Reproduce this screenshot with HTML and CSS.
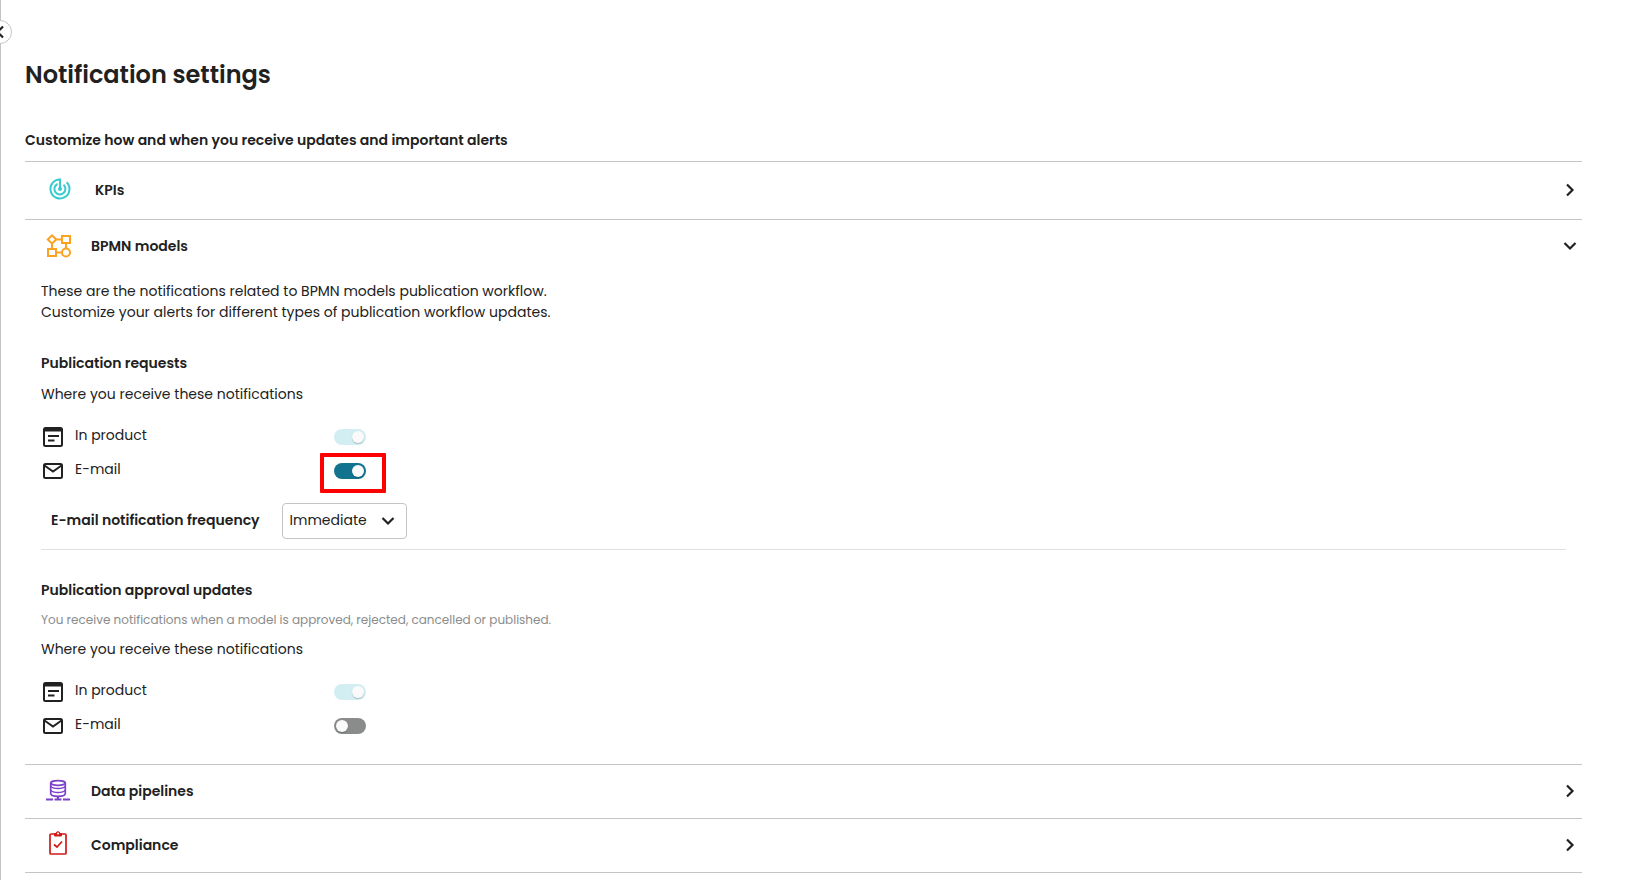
FILE: index.html
```html
<!DOCTYPE html>
<html lang="en">
<head>
  <meta charset="UTF-8" />
  <meta name="viewport" content="width=device-width, initial-scale=1.0"/>
  <title>Notification settings</title>
  <link rel="stylesheet" href="styles.css">
</head>
<body>
  <!-- shared icons -->
  <svg class="sprite" aria-hidden="true">
    <symbol id="chevron" viewBox="0 0 16 16">
      <path d="M5 2.5L10.5 8L5 13.5" fill="none" stroke="currentColor" stroke-width="2.2"/>
    </symbol>
    <symbol id="inProduct" viewBox="0 0 24 24">
      <path d="M19.5 2h-15A2.5 2.5 0 0 0 2 4.5v15A2.5 2.5 0 0 0 4.5 22h15a2.5 2.5 0 0 0 2.5-2.5v-15A2.5 2.5 0 0 0 19.5 2zM20 19.5a.5.5 0 0 1-.5.5h-15a.5.5 0 0 1-.5-.5V6.5h16z" fill="currentColor"/>
      <path d="M7 11h11M7 15.500h6.500" fill="none" stroke="currentColor" stroke-width="2"/>
    </symbol>
    <symbol id="mail" viewBox="0 0 24 24">
      <rect x="3" y="5" width="18" height="14" rx="1.5" fill="none" stroke="currentColor" stroke-width="2"/>
      <path d="M3.5 6.5L12 12.5L20.5 6.5" fill="none" stroke="currentColor" stroke-width="2"/>
    </symbol>
  </svg>

  <button class="collapse-button" aria-label="Collapse sidebar">
    <svg class="chevron flip"><use href="#chevron"/></svg>
  </button>

  <main class="page">
    <h1>Notification settings</h1>
    <p class="subtitle">Customize how and when you receive updates and important alerts</p>

    <section class="group">
      <button class="group-header tall" aria-expanded="false">
        <svg class="group-icon kpi" viewBox="0 0 28 28" fill="none" stroke="currentColor" stroke-width="2">
          <path d="M14 13V3.5A9.5 9.5 0 1 0 20.7 6.3"/>
          <path d="M11.5 8A5.5 5.5 0 1 0 17.5 8.8"/>
          <circle cx="14" cy="13" r="2" fill="currentColor" stroke="none"/>
        </svg>
        <span class="group-name">KPIs</span>
        <svg class="chevron"><use href="#chevron"/></svg>
      </button>
    </section>

    <section class="group">
      <button class="group-header" aria-expanded="true" aria-controls="bpmnPanel">
        <svg class="group-icon bpmn" viewBox="0 0 24 24" fill="none" stroke="currentColor" stroke-width="2">
          <path d="M6 1.3L10.2 5.5L6 9.7L1.8 5.5z"/>
          <rect x="16" y="2" width="8" height="7"/>
          <rect x="2" y="15" width="8" height="7"/>
          <circle cx="20" cy="18.5" r="4"/>
          <path d="M10.2 5.5H16M6 9.7V15M20 9v5.5M10 18.5h6"/>
        </svg>
        <span class="group-name">BPMN models</span>
        <svg class="chevron down"><use href="#chevron"/></svg>
      </button>

      <div class="panel" id="bpmnPanel">
        <p class="intro">These are the notifications related to BPMN models publication workflow.<br>Customize your alerts for different types of publication workflow updates.</p>

        <div class="topic">
          <h3>Publication requests</h3>
          <p>Where you receive these notifications</p>
          <div class="channels">
            <div class="channel">
              <svg class="channel-icon"><use href="#inProduct"/></svg>
              <label for="requestsProduct">In product</label>
              <span class="switch"><input type="checkbox" id="requestsProduct" checked disabled></span>
            </div>
            <div class="channel">
              <svg class="channel-icon"><use href="#mail"/></svg>
              <label for="requestsMail">E-mail</label>
              <span class="switch highlight"><input type="checkbox" id="requestsMail" checked></span>
            </div>
          </div>
          <div class="frequency">
            <label for="frequency">E-mail notification frequency</label>
            <div class="select-box">
              <select id="frequency">
                <option>Immediate</option>
                <option>Daily</option>
                <option>Weekly</option>
              </select>
              <svg class="chevron down"><use href="#chevron"/></svg>
            </div>
          </div>
        </div>

        <div class="topic">
          <h3>Publication approval updates</h3>
          <p class="hint">You receive notifications when a model is approved, rejected, cancelled or published.</p>
          <p>Where you receive these notifications</p>
          <div class="channels">
            <div class="channel">
              <svg class="channel-icon"><use href="#inProduct"/></svg>
              <label for="updatesProduct">In product</label>
              <span class="switch"><input type="checkbox" id="updatesProduct" checked disabled></span>
            </div>
            <div class="channel">
              <svg class="channel-icon"><use href="#mail"/></svg>
              <label for="updatesMail">E-mail</label>
              <span class="switch"><input type="checkbox" id="updatesMail"></span>
            </div>
          </div>
        </div>
      </div>
    </section>

    <section class="group">
      <button class="group-header" aria-expanded="false">
        <svg class="group-icon data" viewBox="0 0 24 24" fill="none" stroke="currentColor" stroke-width="1.7">
          <ellipse cx="12" cy="4" rx="7.3" ry="2.3"/>
          <path d="M4.7 4v10.500c0 1.600 3.200 2.800 7.300 2.800s7.300-1.200 7.300-2.800V4"/>
          <path d="M4.700 7.200c1 1.400 3.600 2.300 7.300 2.300s6.300-.9 7.300-2.300M4.700 11.200c1 1.400 3.600 2.300 7.300 2.300s6.300-.9 7.300-2.300" stroke-width="1.300"/>
          <path d="M12 17.500v3M0 20.500h7M8.500 20.500h7M17 20.500h7" stroke-width="2.200"/>
        </svg>
        <span class="group-name">Data pipelines</span>
        <svg class="chevron"><use href="#chevron"/></svg>
      </button>
    </section>

    <section class="group">
      <button class="group-header" aria-expanded="false">
        <svg class="group-icon compliance" viewBox="0 0 24 24" fill="none" stroke="currentColor" stroke-width="1.7">
          <rect x="4" y="3" width="16" height="20" rx="1"/>
          <path d="M8.5 2.5h1.700a1.800 1.800 0 0 1 3.600 0h1.700v2.500h-7z" fill="currentColor" stroke-width="1"/>
          <circle cx="12" cy="2.500" r="1" fill="#fff" stroke="none"/>
          <path d="M8 13.500l3 2.500l5-5.500"/>
        </svg>
        <span class="group-name">Compliance</span>
        <svg class="chevron"><use href="#chevron"/></svg>
      </button>
    </section>
  </main>
</body>
</html>
```
FILE: styles.css
```css
*, *::before, *::after { box-sizing: border-box; }

body {
  margin: 0;
  min-height: 100vh;
  border-left: 1px solid #c4c4c4;
  background: #fff;
  color: #212121;
  font-family: Poppins, Inter, sans-serif;
  font-size: 14px;
  line-height: 20px;
}

h1, h3, p { margin: 0; }

button, select {
  font: inherit;
  color: inherit;
}

.sprite {
  position: absolute;
  width: 0; height: 0;
}

.chevron { width: 16px; height: 16px; flex: none; }
.chevron.down { transform: rotate(90deg); }
.chevron.flip { transform: rotate(180deg); }

/* hangs over the sidebar edge */
.collapse-button {
  position: absolute;
  top: 20px; left: -12px;
  width: 24px; height: 24px;
  padding: 0;
  display: flex; align-items: center; justify-content: center;
  background: #fff;
  border: 1px solid #c4c4c4;
  border-radius: 50%;
  cursor: pointer;
}

.page { padding: 55px 59px 0 24px; }

h1 {
  font-size: 24px;
  line-height: 40px;
  font-weight: 600;
}

.subtitle {
  margin: 35px 0 11px;
  font-weight: 600;
}

.group { border-top: 1px solid #c4c4c4; }
.group:last-child { border-bottom: 1px solid #c4c4c4; }

.group-header {
  width: 100%;
  min-height: 53px;
  padding: 0 4px 2px 20px;
  display: flex; align-items: center;
  gap: 21px;
  background: none;
  border: none;
  text-align: left;
  cursor: pointer;
}
.group-header.tall { min-height: 57px; }

.group-icon {
  width: 24px; height: 24px;
  flex: none;
  margin-left: 1px;
  overflow: visible;
}
.group-icon.kpi { width: 28px; height: 28px; color: #35cbcf; }
.group-icon.bpmn { color: #fba320; }
.group-icon.data { color: #7b42c8; }
.group-icon.compliance { margin-bottom: 3px; color: #cf1a1a; }

.group-name {
  flex: 1;
  font-weight: 600;
}

.panel { padding: 8px 16px 21px; }

.intro { line-height: 21px; }

.topic { padding-top: 30px; }
.topic + .topic { border-top: 1px solid #e0e0e0; }

h3 {
  margin-bottom: 11px;
  font-size: 14px;
  font-weight: 600;
}
.topic + .topic h3 { margin-bottom: 10px; }

.hint {
  margin-bottom: 9px;
  color: #8a8c8c;
  font-size: 12px;
}

.channels { margin-top: 16px; }

.channel {
  display: grid;
  grid-template-columns: 24px 249px auto;
  column-gap: 10px;
  align-items: center;
  justify-content: start;
  height: 34px;
}
.channel label { padding-bottom: 4px; }
.channel-icon { width: 24px; height: 24px; }

.switch {
  position: relative;
  display: flex;
}
.switch input {
  appearance: none;
  width: 32px; height: 16px;
  margin: 0; padding: 2px;
  display: flex;
  border-radius: 8px;
  background: #8a8c8c;
  cursor: pointer;
}
.switch input::before {
  content: "";
  width: 12px; height: 12px;
  border-radius: 50%;
  background: #fafafa;
  box-shadow: 0 1px 1px rgba(0,0,0,0.2);
}
.switch input:checked {
  justify-content: flex-end;
  background: #12738f;
}
.switch input:disabled {
  background: #d2eef2;
  cursor: default;
}

.highlight::after {
  content: "";
  position: absolute;
  top: -10px; left: -14px;
  width: 66px; height: 40px;
  border: 4px solid #f00;
  border-radius: 1px;
  pointer-events: none;
}

.frequency {
  display: flex; align-items: center;
  gap: 22px;
  padding: 15px 0 10px 10px;
}
.frequency > label {
  padding-bottom: 2px;
  font-weight: 600;
}

.select-box { position: relative; }
.select-box select {
  appearance: none;
  width: 125px; height: 36px;
  padding: 0 32px 2px 7px;
  background: #fff;
  border: 1px solid #c4c4c4;
  border-radius: 4px;
}
.select-box .chevron {
  position: absolute;
  top: 10px; right: 11px;
  pointer-events: none;
}
```
